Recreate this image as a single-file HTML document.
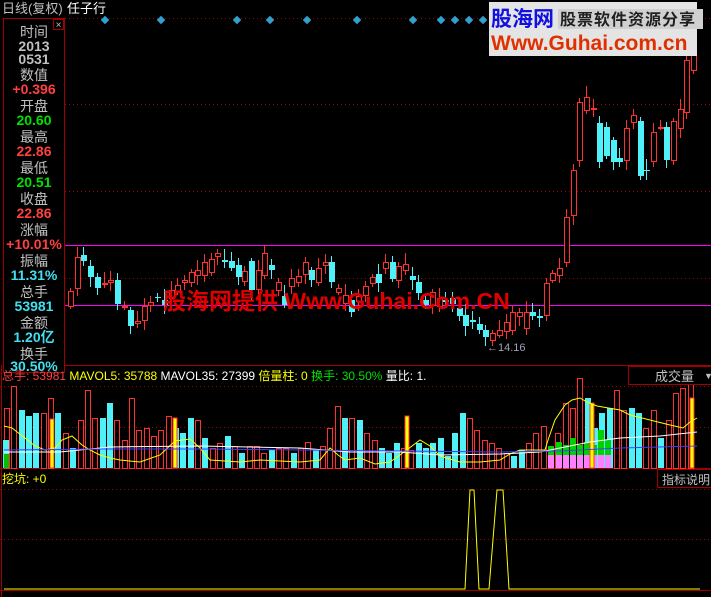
<!DOCTYPE html>
<html><head><meta charset="utf-8"><style>
html,body{margin:0;padding:0;background:#000;width:711px;height:597px;overflow:hidden}
svg{display:block}
text{font-family:"Liberation Sans","Noto Sans CJK SC",sans-serif}
</style></head><body>
<svg id="s" width="711" height="597" xmlns="http://www.w3.org/2000/svg">
<rect width="711" height="597" fill="#000"/>
<text x="2" y="13" fill="#c0c0c0" font-size="13">日线(复权)</text>
<text x="67" y="13" fill="#ffffff" font-size="13">任子行</text>
<rect x="3.5" y="18.5" width="61" height="354" fill="none" stroke="#a00000"/>
<rect x="53.5" y="19.5" width="10" height="10" fill="none" stroke="#a00000"/>
<text x="58.5" y="28" fill="#c0c0c0" font-size="10" text-anchor="middle">×</text>
<g font-size="14" text-anchor="middle" font-weight="bold">
<text x="34" y="37" fill="#c0c0c0" font-weight="normal">时间</text>
<text x="34" y="51" fill="#c0c0c0">2013</text>
<text x="34" y="64" fill="#c0c0c0">0531</text>
<text x="34" y="80" fill="#c0c0c0" font-weight="normal">数值</text>
<text x="34" y="94" fill="#ff4040">+0.396</text>
<text x="34" y="111" fill="#c0c0c0" font-weight="normal">开盘</text>
<text x="34" y="125" fill="#00e000">20.60</text>
<text x="34" y="142" fill="#c0c0c0" font-weight="normal">最高</text>
<text x="34" y="156" fill="#ff4040">22.86</text>
<text x="34" y="173" fill="#c0c0c0" font-weight="normal">最低</text>
<text x="34" y="187" fill="#00e000">20.51</text>
<text x="34" y="204" fill="#c0c0c0" font-weight="normal">收盘</text>
<text x="34" y="218" fill="#ff4040">22.86</text>
<text x="34" y="235" fill="#c0c0c0" font-weight="normal">涨幅</text>
<text x="34" y="249" fill="#ff4040">+10.01%</text>
<text x="34" y="266" fill="#c0c0c0" font-weight="normal">振幅</text>
<text x="34" y="280" fill="#40e0f0">11.31%</text>
<text x="34" y="297" fill="#c0c0c0" font-weight="normal">总手</text>
<text x="34" y="311" fill="#40e0f0">53981</text>
<text x="34" y="328" fill="#c0c0c0" font-weight="normal">金额</text>
<text x="34" y="342" fill="#40e0f0">1.20亿</text>
<text x="34" y="359" fill="#c0c0c0" font-weight="normal">换手</text>
<text x="34" y="371" fill="#40e0f0">30.50%</text>
</g>
<g stroke="#a00000" stroke-dasharray="1,3">
<line x1="65" y1="18.5" x2="711" y2="18.5"/>
<line x1="65" y1="104.5" x2="711" y2="104.5"/>
<line x1="65" y1="191.5" x2="711" y2="191.5"/>
<line x1="65" y1="278.5" x2="711" y2="278.5"/>
<line x1="0" y1="386.5" x2="711" y2="386.5"/>
<line x1="0" y1="427.5" x2="711" y2="427.5"/>
<line x1="0" y1="489.5" x2="711" y2="489.5"/>
<line x1="0" y1="539.5" x2="711" y2="539.5"/>
</g>
<line x1="65" y1="245.5" x2="711" y2="245.5" stroke="#ff00ff"/>
<line x1="65" y1="305.5" x2="711" y2="305.5" stroke="#ff00ff"/>
<line x1="65" y1="365.5" x2="711" y2="365.5" stroke="#a00000"/>
<line x1="0" y1="468.5" x2="711" y2="468.5" stroke="#a00000"/>
<line x1="1.5" y1="365" x2="1.5" y2="597" stroke="#a00000"/>
<line x1="0" y1="590.5" x2="711" y2="590.5" stroke="#a00000"/>
<g id="c"></g>
<polyline fill="none" stroke="#ffff00" points="4,426 12,428 25,438 35,446 45,450 55,448 62,440 72,436 82,445 90,450 100,455 110,458 120,460 140,462 160,455 175,441 190,439 200,448 210,460 240,462 260,460 300,462 320,460 330,448 338,455 345,460 360,458 375,464 390,462 400,455 420,440 430,446 440,456 460,462 480,462 500,460 510,454 520,450 530,450 545,450 548,440 555,420 565,405 572,400 580,398 587,402 597,406 620,410 630,415 650,420 670,425 683,428 690,422 697,418"/>
<polyline fill="none" stroke="#ffffff" points="4,452 60,452 110,447 200,446 300,448 350,452 400,452 440,455 500,454 540,452 560,448 590,442 620,438 660,436 697,432"/>
<polyline fill="none" stroke="#4040ff" points="4,450 100,449 200,449 300,450 400,451 500,452 560,451 620,448 697,446"/>
<text x="487" y="351" fill="#a0a0c0" font-size="11">←14.16</text>
<text x="2" y="380" font-size="12"><tspan fill="#ff4040">总手: 53981 </tspan><tspan fill="#ffff00">MAVOL5: 35788 </tspan><tspan fill="#ffffff">MAVOL35: 27399 </tspan><tspan fill="#ffff00">倍量柱: 0 </tspan><tspan fill="#00e000">换手: 30.50% </tspan><tspan fill="#ffffff">量比: 1.</tspan></text>
<rect x="628.5" y="366.5" width="83" height="18" fill="#000" stroke="#a00000"/>
<text x="655" y="381" fill="#c0c0c0" font-size="13">成交量</text>
<text x="704" y="379" fill="#c0c0c0" font-size="9">▼</text>
<text x="2" y="483" fill="#ffff00" font-size="12">挖坑: +0</text>
<rect x="657.5" y="469.5" width="54" height="18" fill="#000" stroke="#a00000"/>
<text x="662" y="484" fill="#c0c0c0" font-size="12">指标说明</text>
<polyline fill="none" stroke="#ffff00" points="4,589 465,589 470,490 474,490 479,589 489,589 497,490 503,490 509,589 700,589"/>
<text x="163" y="309" fill="#e00000" font-size="23" font-weight="bold">股海网提供 Www.Guhai.Com.CN</text>
<rect x="489" y="2" width="208" height="54" fill="#e4e4e4"/>
<text x="491" y="26" fill="#1010e0" font-size="21" font-weight="bold">股海网</text>
<rect x="558" y="9" width="145" height="20" fill="#d0d0d0"/>
<text x="560" y="25" fill="#202020" font-size="16" font-weight="bold" letter-spacing="1">股票软件资源分享</text>
<text x="491" y="50" fill="#e03000" font-size="21" font-weight="bold">Www.Guhai.com.cn</text>
</svg>
<script>
(function(){
var NS='http://www.w3.org/2000/svg',g=document.getElementById('c');
function el(t,a){var e=document.createElementNS(NS,t);for(var k in a)e.setAttribute(k,String(a[k]));g.appendChild(e);return e;}
var d=[[306,291],[288,257],[255,261],[266,277],[277,288],[284,283],[282,280],[280,304],[307,306],[310,326],[323,321],[320,306],[305,302],[297,298],[300,305],[298,290],[292,285],[282,280],[282,272],[275,270],[275,262],[272,259],[256,253],[260,262],[261,268],[265,277],[281,271],[261,290],[289,270],[275,253],[265,270],[290,282],[296,305],[286,278],[282,276],[274,262],[270,280],[282,268],[265,262],[262,282],[292,288],[303,295],[300,312],[301,296],[295,286],[283,277],[274,283],[268,262],[262,279],[280,266],[270,264],[276,280],[282,293],[300,305],[305,292],[306,298],[300,302],[298,304],[308,316],[315,326],[320,322],[324,330],[330,337],[340,333],[335,330],[331,322],[330,312],[316,312],[328,312],[312,316],[316,318],[315,283],[280,273],[275,268],[262,217],[215,170],[160,102],[110,97],[108,108],[123,162],[127,156],[140,162],[158,162],[160,128],[122,115],[121,176],[170,171],[161,132],[127,127],[127,160],[160,121],[128,109],[112,60],[70,40]];
var vol=[60,82,58,52,55,55,70,55,35,20,48,78,50,50,65,48,28,70,38,40,32,38,52,40,35,50,48,30,20,25,32,22,15,22,22,15,18,20,20,15,20,26,18,22,40,62,50,50,48,35,28,20,15,25,20,18,25,20,25,30,12,35,55,50,38,28,25,20,15,12,18,25,35,42,18,35,65,60,90,70,40,55,60,78,58,60,55,40,58,30,48,75,80,90];
for(var i=0;i<d.length;i++){
 var x=Math.round(68+i*6.7),o=d[i][0],c=d[i][1],up=c<=o,bt=Math.min(o,c),bb=Math.max(o,c);
 var hi=bt-3-(i*7%9),lo=bb+3+(i*5%8);
 var col=up?'#ff3030':'#50f0f8';
 el('line',{x1:x+2.5,y1:hi,x2:x+2.5,y2:lo,stroke:col});
 if(up)el('rect',{x:x+0.5,y:bt+0.5,width:5,height:Math.max(1,bb-bt),fill:'#000',stroke:col});
 else el('rect',{x:x,y:bt,width:6,height:Math.max(1,bb-bt),fill:col});
 var v=vol[i%vol.length],vx=Math.round(4+i*7.35),vt=468-v;
 if(vx<700){
 if(up)el('rect',{x:vx+0.5,y:vt+0.5,width:5,height:v,fill:'#000',stroke:'#ff3030'});
 else el('rect',{x:vx,y:vt,width:6,height:v,fill:'#50f0f8'});
 }
}
[[548,446],[556,442],[563,445],[570,438],[577,445],[584,442],[591,445],[598,430],[605,440]].forEach(function(p){el('rect',{x:p[0],y:p[1],width:6,height:462-p[1],fill:'#00d000'});el('rect',{x:p[0],y:455,width:6,height:13,fill:'#ff80ff'});});
el('rect',{x:3,y:440,width:6,height:28,fill:'#50f0f8'});el('rect',{x:4,y:454,width:5,height:14,fill:'#00c000'});
[[50,419],[173,418],[405,416],[590,403],[690,398]].forEach(function(p){el('rect',{x:p[0],y:p[1],width:4,height:468-p[1],fill:'#ffff00',stroke:'#ff3030'});});
[105,161,237,270,307,357,413,441,455,469,483].forEach(function(x){el('rect',{x:x-3,y:17,width:6,height:6,fill:'#30a0d0',transform:'rotate(45 '+x+' 20)'});});
})();
</script>
</body></html>
